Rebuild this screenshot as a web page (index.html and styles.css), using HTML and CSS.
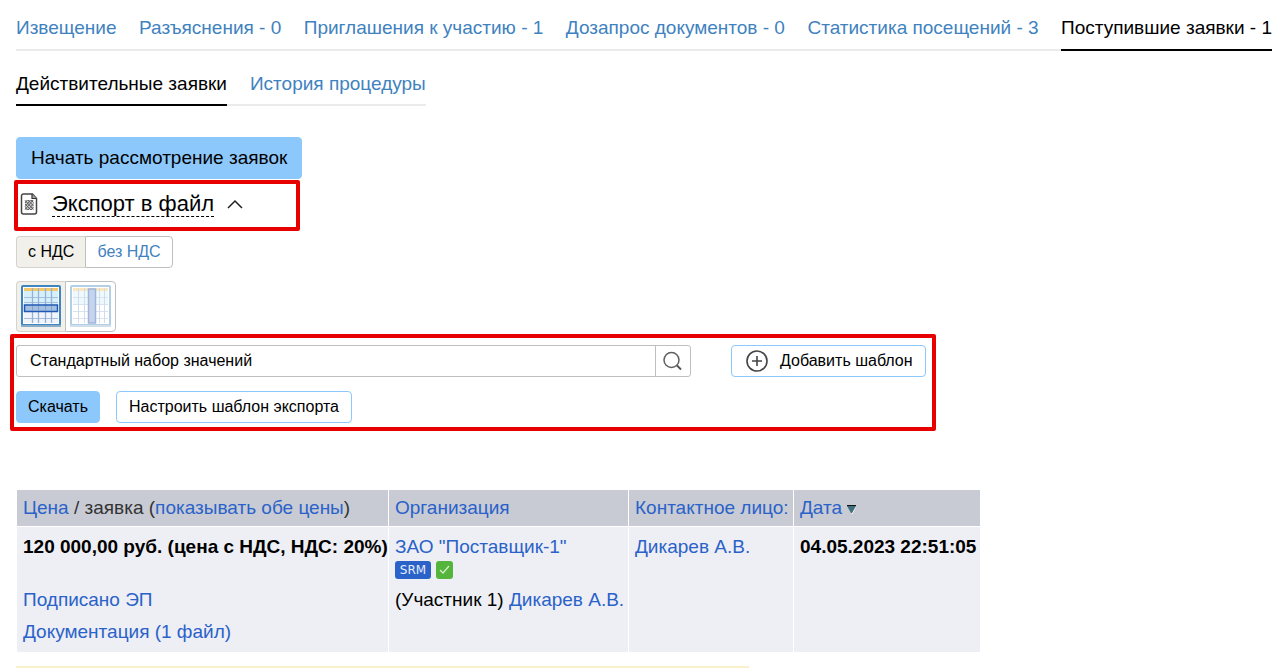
FILE: index.html
```html
<!DOCTYPE html>
<html lang="ru">
<head>
<meta charset="utf-8">
<meta name="viewport" content="width=device-width, initial-scale=1">
<title>Поступившие заявки</title>
<link rel="stylesheet" href="styles.css">
</head>
<body>
<main class="page">
  <nav class="tabs" aria-label="Разделы процедуры">
    <a class="tab" href="#">Извещение</a>
    <a class="tab" href="#">Разъяснения - 0</a>
    <a class="tab" href="#">Приглашения к участию - 1</a>
    <a class="tab" href="#">Дозапрос документов - 0</a>
    <a class="tab" href="#">Статистика посещений - 3</a>
    <a class="tab tab-active" href="#" aria-current="page">Поступившие заявки - 1</a>
  </nav>
  <nav class="tabs subtabs" aria-label="Заявки">
    <a class="tab tab-active" href="#" aria-current="page">Действительные заявки</a>
    <a class="tab" href="#">История процедуры</a>
  </nav>

  <button class="btn btn-primary btn-large" type="button">Начать рассмотрение заявок</button>

  <section class="export">
    <div class="export-head">
      <button class="export-toggle" type="button" aria-expanded="true">
        <svg class="file-icon" width="18" height="24" viewBox="0 0 18 24" aria-hidden="true">
          <path d="M3.500 2h9l4 4.500v13.500a2 2 0 0 1-2 2h-11a2 2 0 0 1-2-2v-16a2 2 0 0 1 2-2z" fill="#fff" stroke="#444" stroke-width="1.500"/>
          <path d="M12 2v4.500h4.500" fill="#aaa" stroke="#333" stroke-width="1.200"/>
          <path d="M5 8h8.500v10h-8.500z" fill="#ccc"/>
          <path d="M5 8.500l8.500 9M8 8l5.500 6M5 12l6 6M5 15.500l3 2.500M11 8l2.500 2.500M5 11l2.500-3M5 14.500l5.500-6.500M5 17.500l8-9.500M8 18l5.500-6.500M11 18l2.500-3" fill="none" stroke="#555" stroke-width=".9"/>
        </svg>
        <span class="export-title">Экспорт в файл</span>
        <svg width="18" height="12" viewBox="0 0 18 12" aria-hidden="true"><path d="M2 10l7-7 7 7" fill="none" stroke="#222" stroke-width="1.500"/></svg>
      </button>
      <span class="mark mark-head"></span>
    </div>

    <div class="segmented vat" role="group" aria-label="НДС">
      <button class="segment segment-active" type="button" aria-pressed="true">с НДС</button>
      <button class="segment" type="button" aria-pressed="false">без НДС</button>
    </div>

    <div class="segmented views" role="group" aria-label="Ориентация таблицы">
      <button class="segment segment-icon segment-active" type="button" aria-label="По строкам" aria-pressed="true">
        <svg width="40" height="42" viewBox="0 0 40 42" aria-hidden="true">
          <rect x="1" y="1" width="38" height="39" rx="1" fill="#fff" stroke="#3f86c0" stroke-width="2"/>
          <path d="M0 41h40" stroke="#89adc7" stroke-width="2"/>
          <rect x="3" y="6" width="34" height="14" fill="#d5f0fb"/>
          <rect x="3" y="27" width="34" height="11" fill="#f1f4fb"/>
          <path d="M3 12.500h34M3 17.500h34M3 33.500h34" stroke="#a9bedc"/>
          <rect x="3" y="3" width="34" height="3" fill="#f5c766"/>
          <path d="M11.500 3v35M17.500 3v35M24.500 3v35M30.500 3v35" stroke="#95b1d6" stroke-width="1.300"/>
          <rect x="3.500" y="20" width="33" height="6.500" fill="#a4bfe0" stroke="#2158b4" stroke-width="1.500"/>
          <path d="M11.500 21v5M17.500 21v5M24.500 21v5M30.500 21v5" stroke="#7f9fcf"/>
        </svg>
      </button>
      <button class="segment segment-icon" type="button" aria-label="По столбцам" aria-pressed="false">
        <svg width="41" height="42" viewBox="0 0 41 42" aria-hidden="true">
          <rect x="1" y="1" width="39" height="39" rx="1" fill="#fff" stroke="#b2cfe5" stroke-width="2"/>
          <path d="M0 41h41" stroke="#d0dfe9" stroke-width="2"/>
          <rect x="3" y="6" width="35" height="14" fill="#eef9fd"/>
          <path d="M3 12.500h35M3 19.500h35M3 26.500h35M3 33.500h35" stroke="#dae2ef"/>
          <rect x="3" y="3" width="35" height="3" fill="#fbe6bd"/>
          <path d="M8.500 3v35M14.500 3v35M29.500 3v35M34.500 3v35" stroke="#d1ddec"/>
          <rect x="18.500" y="4" width="7" height="34" fill="#c6d5eb" stroke="#9fb5dc" stroke-width="1.500"/>
        </svg>
      </button>
    </div>

    <form class="template-form">
      <div class="form-row">
        <div class="search">
          <input class="search-input" type="text" aria-label="Шаблон экспорта" value="Стандартный набор значений">
          <button class="search-btn" type="button" aria-label="Найти">
            <svg width="22" height="22" viewBox="0 0 22 22" aria-hidden="true"><circle cx="10.500" cy="10" r="7.500" fill="none" stroke="#606060" stroke-width="1.500"/><path d="M16 15.500l4 4" stroke="#505050" stroke-width="1.800"/></svg>
          </button>
        </div>
        <button class="btn btn-outline btn-add" type="button">
          <svg width="22" height="22" viewBox="0 0 22 22" aria-hidden="true"><circle cx="11" cy="11" r="10" fill="none" stroke="#444" stroke-width="1.600"/><path d="M11 6v10M6 11h10" stroke="#444" stroke-width="1.600"/></svg>
          Добавить шаблон
        </button>
      </div>
      <div class="form-row form-actions">
        <button class="btn btn-primary" type="button">Скачать</button>
        <button class="btn btn-outline btn-setup" type="button">Настроить шаблон экспорта</button>
      </div>
      <span class="mark mark-form"></span>
    </form>
  </section>

  <table class="bids">
    <thead>
      <tr>
        <th class="col-price" scope="col"><a href="#">Цена</a> / заявка (<a href="#">показывать обе цены</a>)</th>
        <th class="col-org" scope="col"><a href="#">Организация</a></th>
        <th class="col-contact" scope="col"><a href="#">Контактное лицо:</a></th>
        <th class="col-date" scope="col"><a href="#">Дата</a> <svg width="9" height="9" viewBox="0 0 9 9" aria-hidden="true"><path d="M9 1L5 9" stroke="#fff"/><path d="M0 1h9l-4 7h-1z" fill="#3f6f7c"/><path d="M0 .5h9" stroke="#111"/></svg></th>
      </tr>
    </thead>
    <tbody>
      <tr>
        <td>
          <p class="price"><b>120 000,00 руб. (цена с НДС, НДС: 20%)</b></p>
          <p class="line"><a href="#">Подписано ЭП</a></p>
          <p class="line"><a href="#">Документация (1 файл)</a></p>
        </td>
        <td>
          <a href="#">ЗАО "Поставщик-1"</a>
          <div class="badges">
            <span class="badge badge-srm">SRM</span>
            <span class="badge badge-ok"><svg width="11" height="10" viewBox="0 0 11 10" aria-label="Проверено"><path d="M1 5l3 3 6-7" fill="none" stroke="#d7f0cf" stroke-width="1.200"/></svg></span>
          </div>
          <p class="line">(Участник 1) <a href="#">Дикарев А.В.</a></p>
        </td>
        <td><a href="#">Дикарев А.В.</a></td>
        <td><b>04.05.2023 22:51:05</b></td>
      </tr>
    </tbody>
  </table>
  <div class="notice"></div>
</main>
</body>
</html>
```
FILE: styles.css
```css
* { box-sizing: border-box; }
html { overflow: hidden; }
body {
  margin: 0;
  background: #fff;
  color: #000;
  font: 19px/22px "Liberation Sans", Arial, sans-serif;
}
button, input { font: inherit; color: inherit; }
button { margin: 0; cursor: pointer; }
a { color: #2a62c9; text-decoration: none; }
p { margin: 0; }
svg { flex: none; }

.page { padding: 0 12px 0 16px; }

.tabs {
  display: flex;
  justify-content: space-between;
  border-bottom: 2px solid #ebebeb;
  white-space: nowrap;
}
.tab { color: #3f82c0; padding: 17px 0 10px; margin-bottom: -2px; border-bottom: 2px solid transparent; }
.tab-active { color: #000; border-color: #000; }
.subtabs { width: max-content; gap: 23px; margin: 5px 0 31px; }
.subtabs .tab { padding-bottom: 9px; }

.btn {
  display: inline-flex;
  align-items: center;
  justify-content: center;
  height: 32px;
  padding: 0 11px;
  border: 1px solid #8cc8fb;
  border-radius: 4px;
  font-size: 16px;
  white-space: nowrap;
}
.btn-primary { background: #8cc8fb; }
.btn-outline { background: #fff; }
.btn-large { display: flex; height: 42px; padding: 0 14px; font-size: 19px; }

.export-head { position: relative; display: flex; height: 57px; }
.export-toggle {
  display: flex;
  align-items: center;
  align-self: flex-start;
  height: 50px;
  padding: 0 0 0 4px;
  border: 0;
  background: none;
  font-size: 22px;
}
.file-icon { margin-right: 14px; }
.export-title { line-height: 24px; border-bottom: 1px dashed #000; margin-right: 12px; }

.mark { position: absolute; border: 4px solid #e60000; border-radius: 2px; pointer-events: none; }
.mark-head { left: -2px; top: 1px; width: 286px; height: 51px; }
.mark-form { inset: -11px -10px -8px -6px; }

.segmented { display: flex; width: max-content; margin-bottom: 13px; font-size: 16px; }
.segment {
  display: flex;
  align-items: center;
  height: 32px;
  padding: 0 11px;
  border: 1px solid #bfbfbf;
  background: #fff;
  color: #3f82c0;
}
.segment:first-child { border-radius: 4px 0 0 4px; border-color: #d5d3cd; border-right: 0; }
.segment:last-child { border-radius: 0 4px 4px 0; }
.segment-active { background: #f1f0eb; color: #000; }
.segment-icon { align-items: flex-start; height: 51px; padding: 3px 4px; }

.template-form { position: relative; width: max-content; max-width: 100%; font-size: 16px; }
.form-row { display: flex; gap: 40px; }
.form-actions { gap: 16px; margin-top: 14px; }
.search { display: flex; width: 675px; height: 32px; border: 1px solid #bfbfbf; border-radius: 3px; }
.search-input { flex: 1; min-width: 0; padding: 0 13px; border: 0; background: none; outline: 0; }
.search-btn {
  display: flex;
  align-items: center;
  justify-content: center;
  width: 35px;
  padding: 0 2px 0 0;
  border: 0;
  border-left: 1px solid #bfbfbf;
  background: none;
}
.btn-add { gap: 12px; padding: 0 12px 0 14px; }
.btn-setup { padding: 0 12px; }

.bids { margin-top: 67px; border-collapse: separate; border-spacing: 0; white-space: nowrap; }
.bids th, .bids td { padding: 7px 0 7px 6px; text-align: left; vertical-align: top; border-left: 1px solid #fff; }
.bids th { background: #c8cbd3; color: #333; font-weight: normal; }
.bids td { background: #eeeff4; padding-top: 9px; padding-bottom: 9px; border-top: 1px solid #fff; }
.col-price { width: 372px; }
.col-org { width: 240px; }
.col-contact { width: 165px; }
.col-date { width: 187px; }
.price { margin-bottom: 31px; }
.line + .line { margin-top: 10px; }
.badges { display: flex; gap: 5px; margin: 3px 0 10px; }
.badge { display: flex; align-items: center; justify-content: center; height: 18px; border-radius: 3px; }
.badge-srm { width: 36px; background: #2a62c9; color: #e6edfa; font: 12px/18px "DejaVu Sans", sans-serif; }
.badge-ok { width: 17px; background: #55b43c; }
.notice { width: 733px; max-width: 100%; height: 24px; margin-top: 14px; background: #faf0cc; }
```
